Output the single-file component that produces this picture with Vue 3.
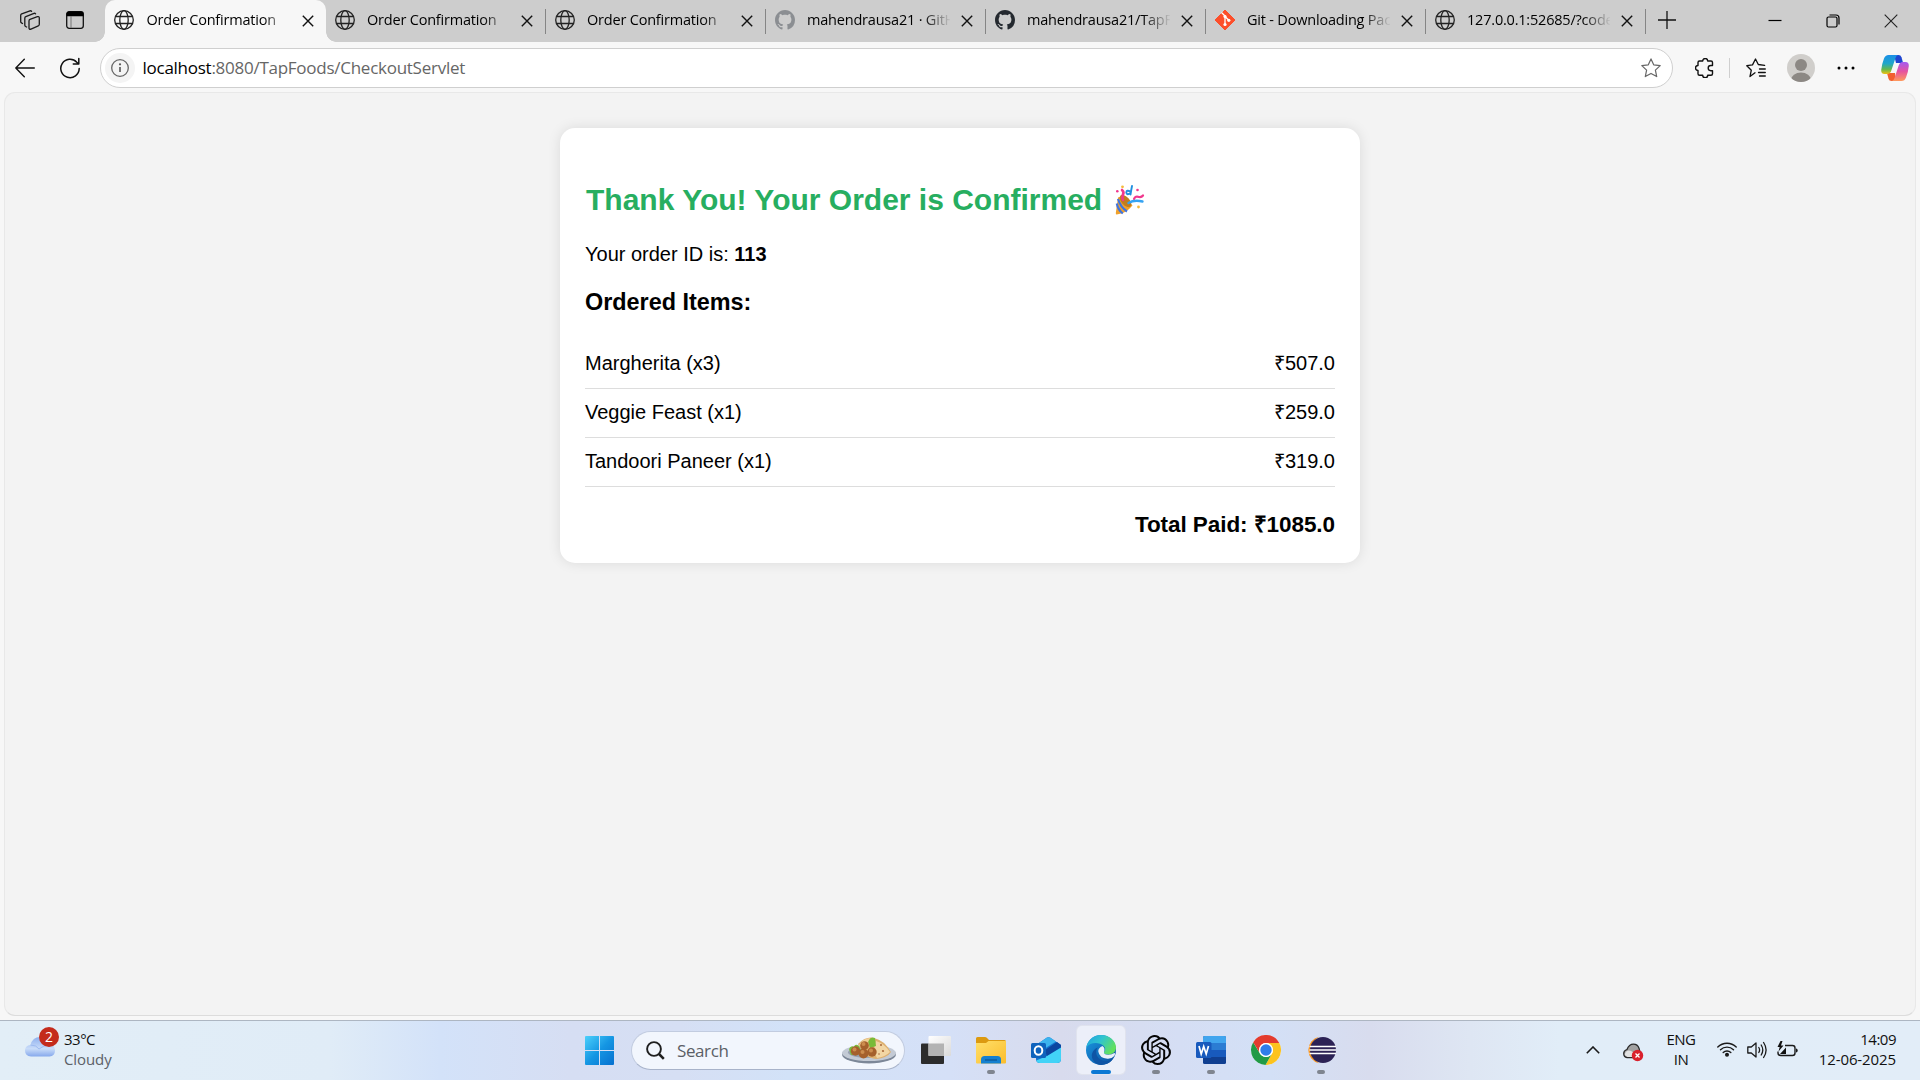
<script setup>
const tabs = [
  { title: 'Order Confirmation', icon: 'globe', active: true },
  { title: 'Order Confirmation', icon: 'globe' },
  { title: 'Order Confirmation', icon: 'globe' },
  { title: 'mahendrausa21 · GitHub', icon: 'github', dim: true },
  { title: 'mahendrausa21/TapFoods', icon: 'github' },
  { title: 'Git - Downloading Package', icon: 'git' },
  { title: '127.0.0.1:52685/?code=', icon: 'globe' },
]
const items = [
  { name: 'Margherita (x3)', price: '₹507.0' },
  { name: 'Veggie Feast (x1)', price: '₹259.0' },
  { name: 'Tandoori Paneer (x1)', price: '₹319.0' },
]
</script>

<template>
  <div class="screen">
    <header class="tabstrip">
      <div class="strip-tools">
        <svg width="20" height="20" viewBox="0 0 20 20" fill="none" stroke="#1b1b1b" stroke-width="1.3" stroke-linejoin="round" stroke-linecap="round">
          <path d="M9 11q0-1.200 1-1.600l7.400-2.700q1.900-.6 1.900 1.200v6.400q0 1.200-1 1.600L11 19.100Q9 19.700 9 18z" />
          <path d="M6.600 17l-1-.5q-.8-.5-.8-1.500V8.200q0-1.200 1-1.600l8.200-3.300q1-.3 1.600.5" />
          <path d="M2.500 13.500l-1-.6q-.8-.5-.8-1.500V5.400q0-1.200 1-1.600L10 .8q1-.3 1.600.5" />
        </svg>
        <svg width="18" height="18" viewBox="0 0 18 18">
          <rect x=".7" y=".7" width="16.6" height="16.6" rx="2.5" fill="none" stroke="#111" stroke-width="1.3" />
          <path d="M.5 5.200V3Q.5.5 3 .5h12q2.500 0 2.500 2.500v2.200z" fill="#000" />
          <path d="M5 5v12" stroke="#777" stroke-width="1" />
        </svg>
      </div>

      <div v-for="(t, i) in tabs" :key="i" class="tab" :class="{ active: t.active }">
        <svg v-if="t.icon === 'globe'" class="fav" viewBox="0 0 20 20" fill="none" stroke="#222" stroke-width="1.3">
          <circle cx="10" cy="10" r="9.3" /><ellipse cx="10" cy="10" rx="4.2" ry="9.3" /><path d="M1.500 6.500h17M1.500 13.500h17" />
        </svg>
        <svg v-else-if="t.icon === 'github'" class="fav" viewBox="0 0 16 16" :fill="t.dim ? '#8b8e92' : '#24292f'">
          <path d="M8 0C3.580 0 0 3.580 0 8c0 3.540 2.290 6.530 5.470 7.590.4.070.55-.17.55-.38 0-.19-.010-.82-.010-1.490-2.010.37-2.530-.49-2.690-.94-.090-.23-.48-.94-.82-1.130-.28-.15-.68-.52-.010-.53.63-.010 1.080.58 1.230.82.72 1.210 1.870.87 2.330.66.070-.52.28-.87.510-1.070-1.780-.2-3.640-.89-3.640-3.950 0-.87.310-1.590.82-2.150-.080-.2-.36-1.020.080-2.120 0 0 .67-.210 2.200.82.64-.18 1.320-.27 2-.27s1.360.090 2 .27c1.530-1.040 2.200-.82 2.200-.82.44 1.100.16 1.920.080 2.120.510.56.82 1.270.82 2.150 0 3.070-1.870 3.750-3.650 3.950.29.25.54.73.54 1.480 0 1.070-.010 1.930-.010 2.200 0 .210.15.46.55.38A8.010 8.010 0 0 0 16 8c0-4.420-3.580-8-8-8z" />
        </svg>
        <svg v-else class="fav" viewBox="0 0 20 20">
          <path d="M10 0l10 10-10 10L0 10z" fill="#fc4f2b" stroke="#fc4f2b" stroke-linejoin="round" />
          <path d="M6.500 2.500L10.500 6.500M10 7v8M10.500 7l3.300 3.300" stroke="#fff" stroke-width="1.3" />
          <circle cx="10" cy="6.500" r="1.6" fill="#fff" /><circle cx="10" cy="14.500" r="1.6" fill="#fff" /><circle cx="13.800" cy="10.300" r="1.6" fill="#fff" />
        </svg>
        <span class="tab-title">{{ t.title }}</span>
        <svg class="x" width="12" height="12" viewBox="0 0 12 12" stroke="#111" stroke-width="1.4"><path d="M.8.8l10.400 10.400M11.200.8L.8 11.200" /></svg>
      </div>

      <svg class="plus" width="18" height="18" viewBox="0 0 18 18" stroke="#111" stroke-width="1.3"><path d="M9 0v18M0 9h18" /></svg>
      <div class="win-controls">
        <svg width="14" height="14" viewBox="0 0 14 14" stroke="#000" stroke-width="1.2"><path d="M.5 6.500h13" /></svg>
        <svg width="14" height="14" viewBox="0 0 14 14" fill="none" stroke="#000" stroke-width="1.2"><rect x="1" y="3" width="10" height="10" rx="1.5" /><path d="M3.500 1h6.500q3 0 3 3v6.500" /></svg>
        <svg width="14" height="14" viewBox="0 0 14 14" stroke="#222" stroke-width="1.1"><path d="M.7.7l12.600 12.600M13.300.7L.7 13.300" /></svg>
      </div>
    </header>

    <nav class="toolbar">
      <svg class="back" width="20" height="20" viewBox="0 0 20 20" fill="none" stroke="#111" stroke-width="1.4" stroke-linecap="round" stroke-linejoin="round"><path d="M19.300 10H.8M9.300 1.200L.8 10l8.500 8.800" /></svg>
      <svg class="reload" width="20" height="22" viewBox="0 0 20 22" fill="none" stroke="#111" stroke-width="1.5" stroke-linecap="round" stroke-linejoin="round"><path d="M19.200 11.500A9.200 9.200 0 1 1 16.800 5.200l1.800 1.800M18.800 1.500V7h-5.500" /></svg>
      <div class="address">
        <span class="info"><svg width="18" height="18" viewBox="0 0 18 18"><circle cx="9" cy="9" r="8.300" fill="none" stroke="#666" stroke-width="1.3" /><path d="M9 8v5" stroke="#555" stroke-width="1.6" /><circle cx="9" cy="5.300" r="1.1" fill="#555" /></svg></span>
        <span class="url"><b>localhost</b>:8080/TapFoods/CheckoutServlet</span>
        <svg class="star" width="20" height="20" viewBox="0 0 20 20" fill="none" stroke="#666" stroke-width="1.2" stroke-linejoin="round"><path d="M10 .9l2.700 5.900 6.500.8-4.800 4.500 1.300 6.500L10 15.400l-5.700 3.200 1.300-6.500L.8 7.600l6.500-.8z" /></svg>
      </div>
      <svg class="puzzle" width="20" height="20" viewBox="0 0 20 20" fill="none" stroke="#111" stroke-width="1.4" stroke-linejoin="round"><path d="M4.500 3h3.200a2.500 2.500 0 0 1 5 0H16q1.500 0 1.500 1.500v3h-1.700a2.600 2.600 0 0 0 0 5.200h1.700v3.100q0 1.500-1.500 1.500h-3.300a2.500 2.500 0 0 1-5 0H4.500Q3 17.300 3 15.800v-3.300a2.500 2.500 0 0 1 0-5v-3Q3 3 4.500 3z" /></svg>
      <span class="tb-sep"></span>
      <svg class="favs" width="20" height="20" viewBox="0 0 20 20" fill="none" stroke="#111" stroke-width="1.4" stroke-linejoin="round" stroke-linecap="round"><path d="M9 14.800l-5 3.700 1.300-6.300L.8 7.700l5.700-.8L9.500 1l2.800 5.500 6.300.9M13.500 11h5.800M12.500 14.500h6.800M13.500 18h5.800" stroke-width="1.3" /></svg>
      <svg class="avatar" width="28" height="28" viewBox="0 0 28 28"><defs><clipPath id="av"><circle cx="14" cy="14" r="14" /></clipPath></defs><g clip-path="url(#av)"><rect width="28" height="28" fill="#d0cecb" /><circle cx="14" cy="11" r="6" fill="#8c8884" /><ellipse cx="14" cy="26" rx="10" ry="7.500" fill="#8c8884" /></g></svg>
      <svg class="dots" width="18" height="4" viewBox="0 0 18 4"><circle cx="2" cy="2" r="1.500" /><circle cx="9" cy="2" r="1.500" /><circle cx="16" cy="2" r="1.500" /></svg>
      <svg class="copilot" width="28" height="26" viewBox="0 0 28 26">
        <defs>
          <linearGradient id="cpA" x1="0" y1="0" x2="0" y2="1"><stop offset="0" stop-color="#1b8fe8" /><stop offset=".45" stop-color="#1fa6c9" /><stop offset=".75" stop-color="#63b84e" /><stop offset="1" stop-color="#f2c011" /></linearGradient>
          <linearGradient id="cpB" x1="0" y1="0" x2="0" y2="1"><stop offset="0" stop-color="#a35af2" /><stop offset=".5" stop-color="#e653a0" /><stop offset="1" stop-color="#ff9a5c" /></linearGradient>
        </defs>
        <path d="M13 0h4.500q2.300 0 3 2.300l1.600 5.700H15z" fill="#1f46d0" />
        <path d="M15 26h-4.500q-2.300 0-3-2.300L6 18h8z" fill="#f2602f" />
        <path d="M7.500 0H17q-1.800.5-2.600 3.200l-4 12q-1 3.800-4.200 3.800H3.500Q0 19 .2 15q.5-5.500 2.800-11.500Q4.300 0 7.500 0z" fill="url(#cpA)" />
        <path d="M20.500 26H11q1.800-.5 2.600-3.200l4-12Q18.600 7 21.800 7h2.700q3.500 0 3.300 4-.5 5.500-2.800 11.500Q23.700 26 20.500 26z" fill="url(#cpB)" />
      </svg>
    </nav>

    <main class="page">
      <section class="card">
        <h2>
          <span>Thank You! Your Order is Confirmed</span>
          <svg class="party" width="30" height="30" viewBox="0 0 30 30" fill="none">
            <path d="M3 12.500Q9 9 17.500 20.500Q11 28.500 1.800 29.500Q.6 29.500.8 28z" fill="#f0a12b" />
            <path d="M1.800 18.500q1 6 6 10M3 14q2.500 8 9 12.500" stroke="#3f74e0" stroke-width="2.2" />
            <ellipse cx="10.500" cy="16" rx="4" ry="7.500" transform="rotate(-42 10.500 16)" fill="#c27c1e" />
            <path d="M7 5q2.500 2 .8 5-.8 3 .2 5" stroke="#f0388d" stroke-width="2.6" stroke-linecap="round" />
            <path d="M17 1q-1 5-1.500 8.500M15.500 6.500q-4-2-4.200 1 .7 3.200 4.200.5" stroke="#1f8fe0" stroke-width="1.9" stroke-linecap="round" />
            <path d="M19 14q1.500-3.500 5-2 2.500.5 4-1.500" stroke="#f0388d" stroke-width="2.2" stroke-linecap="round" />
            <path d="M13.500 18q5.500-3.500 14-1.500" stroke="#35a3f2" stroke-width="2.4" stroke-linecap="round" />
            <circle cx="7.500" cy="1.800" r="1.4" fill="#f6b93b" /><circle cx="2.300" cy="6.300" r="1.3" fill="#f0388d" /><circle cx="22.500" cy="5" r="1.3" fill="#f0388d" /><circle cx="23.500" cy="22" r="1.4" fill="#f6b93b" />
          </svg>
        </h2>
        <p>Your order ID is: <strong>113</strong></p>
        <h3>Ordered Items:</h3>
        <div v-for="it in items" :key="it.name" class="item"><span>{{ it.name }}</span><span>{{ it.price }}</span></div>
        <div class="total">Total Paid: ₹1085.0</div>
      </section>
    </main>

    <footer class="taskbar">
      <div class="weather">
        <div class="cloud">
          <svg width="30" height="21" viewBox="0 0 30 21"><defs><linearGradient id="cl" x1="0" y1="0" x2="0" y2="1"><stop offset="0" stop-color="#8fb0ee" /><stop offset=".6" stop-color="#c9dcf9" /><stop offset="1" stop-color="#86a9ec" /></linearGradient></defs><path d="M6 20.500Q0 20 0 14.500 0 9.500 5.500 9 7.500 1 15 1q7 0 9 7.500Q30 9 30 14.500t-5.500 6z" fill="url(#cl)" /><path d="M5.500 9q6 0 8.500 4 5-4 10-4" fill="none" stroke="#9dbaf0" stroke-width="1" /></svg>
          <span class="badge">2</span>
        </div>
        <div class="w-text"><span>33°C</span><span class="muted">Cloudy</span></div>
      </div>

      <div class="center">
        <svg class="start" width="29" height="29" viewBox="0 0 29 29"><defs><linearGradient id="st" x1="0" y1="0" x2="1" y2="1"><stop offset="0" stop-color="#4cd0fb" /><stop offset=".5" stop-color="#1596e3" /><stop offset="1" stop-color="#0670cf" /></linearGradient></defs><path d="M1 0h13v14H0V1q0-1 1-1zM15 0h13q1 0 1 1v13H15zM0 15h14v14H1q-1 0-1-1zM15 15h14v13q0 1-1 1H15z" fill="url(#st)" /></svg>
        <div class="search">
          <svg width="19" height="19" viewBox="0 0 19 19" fill="none" stroke="#1f1f1f"><circle cx="8" cy="8" r="6.900" stroke-width="1.9" /><path d="M13 13l4.800 4.800" stroke-width="2.5" /></svg>
          <span>Search</span>
          <svg class="food" width="54" height="27" viewBox="0 0 54 27">
            <ellipse cx="27" cy="17.500" rx="27" ry="9" fill="#7c8798" /><ellipse cx="27" cy="16" rx="27" ry="8" fill="#c3cad5" /><ellipse cx="27" cy="15.500" rx="21" ry="5.500" fill="#97a1b0" />
            <path d="M16 7Q24-1 32 1q10 2 17 14-4 6-15 7-12-1-18-15z" fill="#ddb070" /><path d="M34 4q9 3 14 11-5 5-13 6-5-8-1-17z" fill="#f2d6a4" />
            <path d="M7 12q2-4 5-2 1-4 5-1l3 7-11 2zM26 4q3-5 7-3l1 8-6 2z" fill="#79bb38" />
            <path d="M17 8q3-6 11-7l-2 4-8 5z" fill="#f0cf96" />
            <g fill="#a5602c"><circle cx="13.500" cy="14" r="4.700" /><circle cx="22.500" cy="8.500" r="4.300" /><circle cx="30" cy="15" r="4.700" /><circle cx="21.500" cy="16.500" r="4.900" /></g>
            <g fill="#cc8c4e"><circle cx="12.500" cy="12.500" r="2" /><circle cx="21.500" cy="7" r="2" /><circle cx="29" cy="13.500" r="2" /><circle cx="20.500" cy="15" r="2" /></g>
            <g fill="#a8693a"><circle cx="39" cy="8" r="1" /><circle cx="41" cy="14" r="1.1" /><circle cx="37" cy="17" r=".8" /></g>
          </svg>
        </div>
        <div class="app">
          <svg width="30" height="28" viewBox="0 0 30 28"><defs><linearGradient id="tv" x1="0" y1="0" x2="1" y2="1"><stop offset="0" stop-color="#fff" /><stop offset="1" stop-color="#dadada" /></linearGradient></defs><rect y="7.500" width="23" height="20.500" rx="1" fill="#2c2c2c" /><rect x="7.500" width="22.500" height="20" rx="1" fill="url(#tv)" /><path d="M7.500 7.500H23V20H7.500z" fill="#b3b3b3" /></svg>
        </div>
        <div class="app run">
          <svg width="30" height="27" viewBox="0 0 30 27"><defs><linearGradient id="fo" x1="0" y1="0" x2="1" y2="1"><stop offset="0" stop-color="#ffdf69" /><stop offset="1" stop-color="#fbbd2c" /></linearGradient></defs><path d="M0 1.500Q0 0 1.500 0H9q1 0 1.800.8L13 3h15.500Q30 3 30 4.500V8H0z" fill="#dc9a10" /><path d="M0 6h10l2.500-2H30v21.500q0 1-1 1H1q-1 0-1-1z" fill="url(#fo)" /><path d="M5 26.500v-4q0-3.500 3.500-3.500h13q3.500 0 3.500 3.500v4z" fill="#1480d0" /><path d="M9 23h12" stroke="#0b5796" stroke-width="1.3" /></svg>
        </div>
        <div class="app">
          <svg width="30" height="26" viewBox="0 0 30 26"><path d="M5 8L16 .6Q17.500-.2 19 .6L30 8v14q0 4-4 4H9q-4 0-4-4z" fill="#1373d0" /><path d="M5 8L16 .6Q17.500-.2 19 .6L25 4.500 13 12z" fill="#3bb3ee" /><path d="M14 13L26 5l4 3v3L16 20z" fill="#0c46a0" /><path d="M30 10.500v11.500q0 4-4 4H9q-3 0-3.800-2.500L16 19z" fill="#42d3f7" /><rect y="6" width="15" height="15" rx="1.500" fill="#0f63bd" /><ellipse cx="7.500" cy="13.500" rx="3.800" ry="4.300" fill="none" stroke="#fff" stroke-width="2" /></svg>
        </div>
        <div class="app run current">
          <svg width="30" height="30" viewBox="0 0 30 30"><defs><linearGradient id="e1" x1="0" y1="0" x2="1" y2=".5"><stop offset="0" stop-color="#1e9fe0" /><stop offset=".5" stop-color="#30c4cf" /><stop offset="1" stop-color="#62e05e" /></linearGradient><linearGradient id="e2" x1="0" y1="0" x2="1" y2="1"><stop offset="0" stop-color="#1a9be3" /><stop offset="1" stop-color="#0b4a9c" /></linearGradient></defs><circle cx="15" cy="15" r="15" fill="url(#e2)" /><path d="M.3 12.500C1.500 5 7.500 0 15 0c8.500 0 15 6 15 12.500 0 4.500-3.500 7-8 7-3 0-4.500-1-4-2.500 1.800-2 1.500-4.500-.5-6.300C13 6.800 4 7 .3 12.500z" fill="url(#e1)" /><path d="M12 12.500c-4 4.500-1 12.500 7 13.500 3.500.4 6-.5 8.300-2.500C23 30 15 31 11 29 3 24 5 15 12 12.500z" fill="#0f55a5" /><path d="M16.500 11q3 2 1.500 6-.5 2.500 4 2.800 3.500.2 6.300-1.800 1.500 0 0 3-2.500 3-7 2.700-8-.7-9-7.200-.3-3.500 4.200-5.500z" fill="#e9f0fa" /></svg>
        </div>
        <div class="app run">
          <svg width="30" height="30" viewBox="0 0 24 24" fill="#050505"><path d="M22.282 9.821a5.985 5.985 0 0 0-.516-4.911 6.046 6.046 0 0 0-6.510-2.900A6.065 6.065 0 0 0 4.981 4.182a5.985 5.985 0 0 0-3.998 2.900 6.046 6.046 0 0 0 .743 7.097 5.980 5.980 0 0 0 .511 4.911 6.051 6.051 0 0 0 6.515 2.900A5.985 5.985 0 0 0 13.260 24a6.056 6.056 0 0 0 5.772-4.206 5.990 5.990 0 0 0 3.998-2.900 6.056 6.056 0 0 0-.748-7.073zM13.260 22.430a4.476 4.476 0 0 1-2.876-1.041l.141-.080 4.779-2.758a.795.795 0 0 0 .393-.681v-6.737l2.020 1.169a.071.071 0 0 1 .038.052v5.583a4.504 4.504 0 0 1-4.495 4.493zM3.600 18.304a4.471 4.471 0 0 1-.535-3.014l.142.085 4.783 2.759a.771.771 0 0 0 .781 0l5.843-3.369v2.332a.080.080 0 0 1-.033.062L9.740 19.950a4.500 4.500 0 0 1-6.140-1.646zM2.341 7.896a4.485 4.485 0 0 1 2.365-1.973V11.600a.766.766 0 0 0 .388.677l5.814 3.354-2.020 1.169a.076.076 0 0 1-.071 0l-4.830-2.787A4.504 4.504 0 0 1 2.341 7.872zm16.597 3.855l-5.834-3.387L15.119 7.200a.076.076 0 0 1 .071 0l4.830 2.791a4.494 4.494 0 0 1-.676 8.105v-5.678a.790.790 0 0 0-.407-.667zm2.010-3.023l-.141-.085-4.774-2.782a.776.776 0 0 0-.785 0L9.409 9.230V6.897a.066.066 0 0 1 .028-.061l4.830-2.787a4.500 4.500 0 0 1 6.681 4.660zM8.307 12.863l-2.020-1.164a.080.080 0 0 1-.038-.057V6.075a4.500 4.500 0 0 1 7.376-3.454l-.142.081L8.704 5.460a.795.795 0 0 0-.393.681zm1.097-2.366l2.602-1.500 2.607 1.500v2.999l-2.597 1.500-2.607-1.500z" /></svg>
        </div>
        <div class="app run">
          <svg width="30" height="28" viewBox="0 0 30 28"><rect x="7" width="23" height="28" rx="1.5" fill="#103f91" /><path d="M7 7h23v7H7z" fill="#2b7cd3" /><path d="M8.500 0h20Q30 0 30 1.500V7H7V1.500Q7 0 8.500 0z" fill="#41a5ee" /><path d="M7 14h23v7H7z" fill="#185abd" /><rect y="6" width="15.500" height="16" rx="1.5" fill="#185abd" /><path d="M3 10l2.200 8 2.500-7.500 2.500 7.500 2.300-8" fill="none" stroke="#fff" stroke-width="1.7" /></svg>
        </div>
        <div class="app">
          <svg width="30" height="30" viewBox="0 0 30 30"><circle cx="15" cy="15" r="15" fill="#fff" /><path d="M15 8h13.300A15 15 0 0 1 14.500 30L21 18.500A7 7 0 0 0 15 8z" fill="#fcc31e" /><path d="M9 18.500L2.200 7.200A15 15 0 0 0 14.500 30L21 18.500a7 7 0 0 1-12 0z" fill="#219a46" /><path d="M28.300 8H15a7 7 0 0 0-6.100 10.300L2.200 7.200A15 15 0 0 1 28.300 8z" fill="#e33b2e" /><circle cx="15" cy="15" r="7" fill="#fff" /><circle cx="15" cy="15" r="5.700" fill="#2f7de9" /></svg>
        </div>
        <div class="app run">
          <svg width="30" height="28" viewBox="0 0 30 28"><path d="M13 .8a13.500 13.500 0 0 0 0 26.400Q5 22 5 14T13 .8z" fill="#f7941e" /><circle cx="17" cy="14" r="13" fill="#2c2255" /><path d="M3.500 10.500H30M3.500 14H30M3.500 17.500H30" stroke="#fff" stroke-width="1.6" /></svg>
        </div>
      </div>

      <div class="tray">
        <svg class="chev" width="14" height="8" viewBox="0 0 14 8" fill="none" stroke="#1a1a1a" stroke-width="1.6"><path d="M.8 7.200L7 1l6.200 6.200" /></svg>
        <svg class="drive" width="21" height="19" viewBox="0 0 21 19"><path d="M4 14.500Q.7 14 .7 10.500.7 7.500 4 6.500 6 1.200 10.500 1.200 14.500 1.200 16 5.200l1 4-5 5.300z" fill="#a2a2a2" stroke="#2a2a2a" stroke-width="1.3" /><path d="M1.800 12Q2 8 5.500 7.500q4 0 6 3.500l-1 3H4.500z" fill="#e2e2e2" /><circle cx="14.500" cy="12.500" r="5.700" fill="#d9202c" /><path d="M12.500 10.500l4 4M16.500 10.500l-4 4" stroke="#fff" stroke-width="1.3" /></svg>
        <div class="lang"><span>ENG</span><span>IN</span></div>
        <svg class="wifi" width="20" height="16" viewBox="0 0 20 16" fill="none" stroke="#1a1a1a" stroke-width="1.4" stroke-linecap="round"><path d="M.8 6a13 13 0 0 1 18.400 0M3.500 8.800a9.200 9.200 0 0 1 13 0M6.200 11.500a5.400 5.400 0 0 1 7.600 0" /><circle cx="10" cy="13.800" r="1.3" fill="#1a1a1a" /></svg>
        <svg class="sound" width="20" height="18" viewBox="0 0 20 18" fill="none" stroke="#1a1a1a" stroke-width="1.3" stroke-linecap="round" stroke-linejoin="round"><path d="M.8 6h3.500L9 2v14l-4.700-4H.8zM11.800 6.500q1.600 2.500 0 5M14.200 4q3.200 5 0 10M16.600 1.500q5 7.500 0 15" /></svg>
        <svg class="batt" width="21" height="18" viewBox="0 0 21 18"><path d="M8 4.500h7.500q2.500 0 2.500 2.500v5q0 2.500-2.500 2.500H4Q1 14.500 1 12v-1.500" fill="none" stroke="#1a1a1a" stroke-width="1.4" /><path d="M19 7.500q1.700 0 1.700 2t-1.700 2z" fill="#1a1a1a" /><path d="M3 13l6-6.500V13zM3.500 0L.5 6h2.200L1.500 10.500 6.500 4.500H4L5.500 0z" fill="#111" /></svg>
        <div class="clock"><span>14:09</span><span class="date">12-06-2025</span></div>
      </div>
    </footer>
  </div>
</template>

<style>
body { margin: 0; overflow: hidden; }
</style>

<style scoped>
* { box-sizing: border-box; }
svg { display: block; flex: none; }
.screen { width: 1920px; height: 1080px; display: flex; flex-direction: column; background: #f7f7f7; font-family: "Open Sans", "Noto Sans", sans-serif; color: #111; }

.tabstrip { height: 42px; display: flex; background: #cdcdcd; flex: none; }
.strip-tools { width: 105px; padding: 10px 0 0 20px; display: flex; gap: 26px; }
.strip-tools svg:last-child { margin-top: 1px; }
.tab { position: relative; width: 220px; height: 42px; padding: 0 0 2px 9px; display: flex; align-items: center; flex: none; }
.tab::after { content: ""; width: 1px; height: 25px; background: #858585; margin: 3px 0 0 12px; }
.tab.active { background: #f7f7f7; border-radius: 10px 10px 0 0; width: 221px; margin-right: -.5px; }
.tab.active::after { position: absolute; left: 221px; bottom: 0; width: 10px; height: 10px; margin: 0; background: radial-gradient(circle at 10px 0, transparent 9.5px, #f7f7f7 10px); }
.tab.active::before { content: ""; position: absolute; left: -10px; bottom: 0; width: 10px; height: 10px; background: radial-gradient(circle at 0 0, transparent 9.5px, #f7f7f7 10px); }
.fav { width: 20px; height: 20px; }
.tab-title { width: 144px; margin-left: 12.5px; overflow: hidden; white-space: nowrap; font-size: 14.5px; line-height: 22px; letter-spacing: -.2px; color: #000; -webkit-mask-image: linear-gradient(90deg, #000 116px, transparent 144px); mask-image: linear-gradient(90deg, #000 116px, transparent 144px); }
.x { margin: 2px 0 0 11px; }
.plus { margin: 11px 0 0 12.5px; }
.win-controls { margin: 14px 22px 0 auto; display: flex; gap: 44px; }

.toolbar { height: 50px; flex: none; display: flex; align-items: center; padding: 2px 0 0 15px; }
.reload { margin-left: 25px; }
.address { margin-left: 20px; width: 1573px; height: 40px; border: 1px solid #cfcfcf; border-radius: 20px; background: #fff; display: flex; align-items: center; padding-left: 4px; }
.info { width: 30px; height: 30px; border-radius: 50%; background: #f4f4f4; display: flex; align-items: center; justify-content: center; }
.url { margin-left: 7.5px; font-size: 17px; line-height: 26px; letter-spacing: -.26px; color: #666; }
.url b { font-weight: 400; color: #000; }
.star { margin-left: auto; margin-right: 11px; }
.puzzle { margin-left: 22px; }
.tb-sep { width: 1px; height: 20px; background: #cfcfcf; margin-left: 14px; }
.favs { margin-left: 16px; }
.avatar { margin-left: 21px; }
.dots { margin-left: 22px; }
.copilot { margin-left: 26px; }

.page { height: 924px; margin: 0 4px; flex: none; border: 1px solid #e8e8e8; border-bottom-color: #dcdcdc; border-radius: 11px; background: #f3f3f3; font-family: "Liberation Sans", Arial, sans-serif; color: #000; }
.card { width: 800px; height: 435px; margin: 35px auto 0; padding: 25px; border-radius: 15px; background: #fff; box-shadow: 0 0 12.5px rgba(0, 0, 0, .1); font-size: 20px; line-height: 23px; }
h2 { margin: 25px 0; height: 40px; padding: 3px 0 0 1px; display: flex; align-items: center; font-size: 30px; line-height: 37px; color: #27ae60; white-space: nowrap; }
.party { margin-left: 13px; }
p { margin: 0; }
h3 { margin: 23px 0 24px; font-size: 23.4px; line-height: 27px; }
.item { display: flex; justify-content: space-between; height: 49px; padding-top: 12px; border-bottom: 1px solid #ddd; }
.total { margin-top: 24px; font-size: 22.5px; line-height: 27px; font-weight: 700; text-align: right; letter-spacing: -.07px; }

.taskbar { margin-top: 4px; height: 60px; flex: none; display: flex; border-top: 1px solid #adb6c2; background: linear-gradient(90deg, #e2eef7 0, #e0ecf7 330px, #d3e2f9 440px, #d6def3 570px, #d6dff4 680px, #d2e2f8 790px, #d5e0f7 950px, #d8dbed 1060px, #d5def4 1180px, #d3e0f6 1270px, #d8dcee 1370px, #deE6f3 1470px, #e1edf8 1560px, #e2edf8 1920px); font-size: 15px; line-height: 20px; }
.weather { width: 585px; display: flex; padding: 8px 0 0 25px; }
.cloud { position: relative; width: 30px; padding-top: 7px; }
.badge { position: absolute; left: 14px; top: -2px; width: 20px; height: 20px; border-radius: 50%; background: #c42b1c; color: #fff; font-size: 14px; line-height: 20px; text-align: center; }
.w-text, .lang, .clock { display: flex; flex-direction: column; letter-spacing: -.5px; }
.w-text { margin-left: 9px; }
.muted { color: #5c6168; letter-spacing: -.1px; }
.center { display: flex; }
.start { margin: 15px 17px 0 0; }
.search { width: 274px; height: 39px; margin: 10px 7px 0 0; border: 1px solid #c2cce0; border-bottom-color: #a8b3ca; border-radius: 20px; background: #f2f6fd; display: flex; align-items: center; padding-left: 14px; font-size: 17px; color: #5b5f66; }
.search span { margin-left: 12px; letter-spacing: -.4px; }
.food { margin: 0 8px 0 auto; }
.app { position: relative; width: 48px; height: 48px; margin: 5px 7px 0 0; display: flex; align-items: center; justify-content: center; border-radius: 5px; }
.app.run::after { content: ""; position: absolute; bottom: 0; left: 20px; width: 8px; height: 4px; border-radius: 2px; background: #7f858f; }
.app.current { background: #eceff9; box-shadow: 0 0 0 1px #e0e3ee; }
.app.current::after { left: 14px; width: 20px; background: #0a78d4; }
.tray { margin-left: auto; display: flex; padding: 8px 24px 0 0; }
.chev { margin: 17px 23px 0 0; }
.drive { margin: 14px 22px 0 0; }
.lang { width: 30px; text-align: center; margin-right: 21px; }
.wifi { margin: 12px 10px 0 0; }
.sound { margin: 12px 10px 0 0; }
.batt { margin: 12px 19px 0 0; }
.clock { width: 79px; text-align: right; align-items: flex-end; }
.date { letter-spacing: -.1px; }
</style>
